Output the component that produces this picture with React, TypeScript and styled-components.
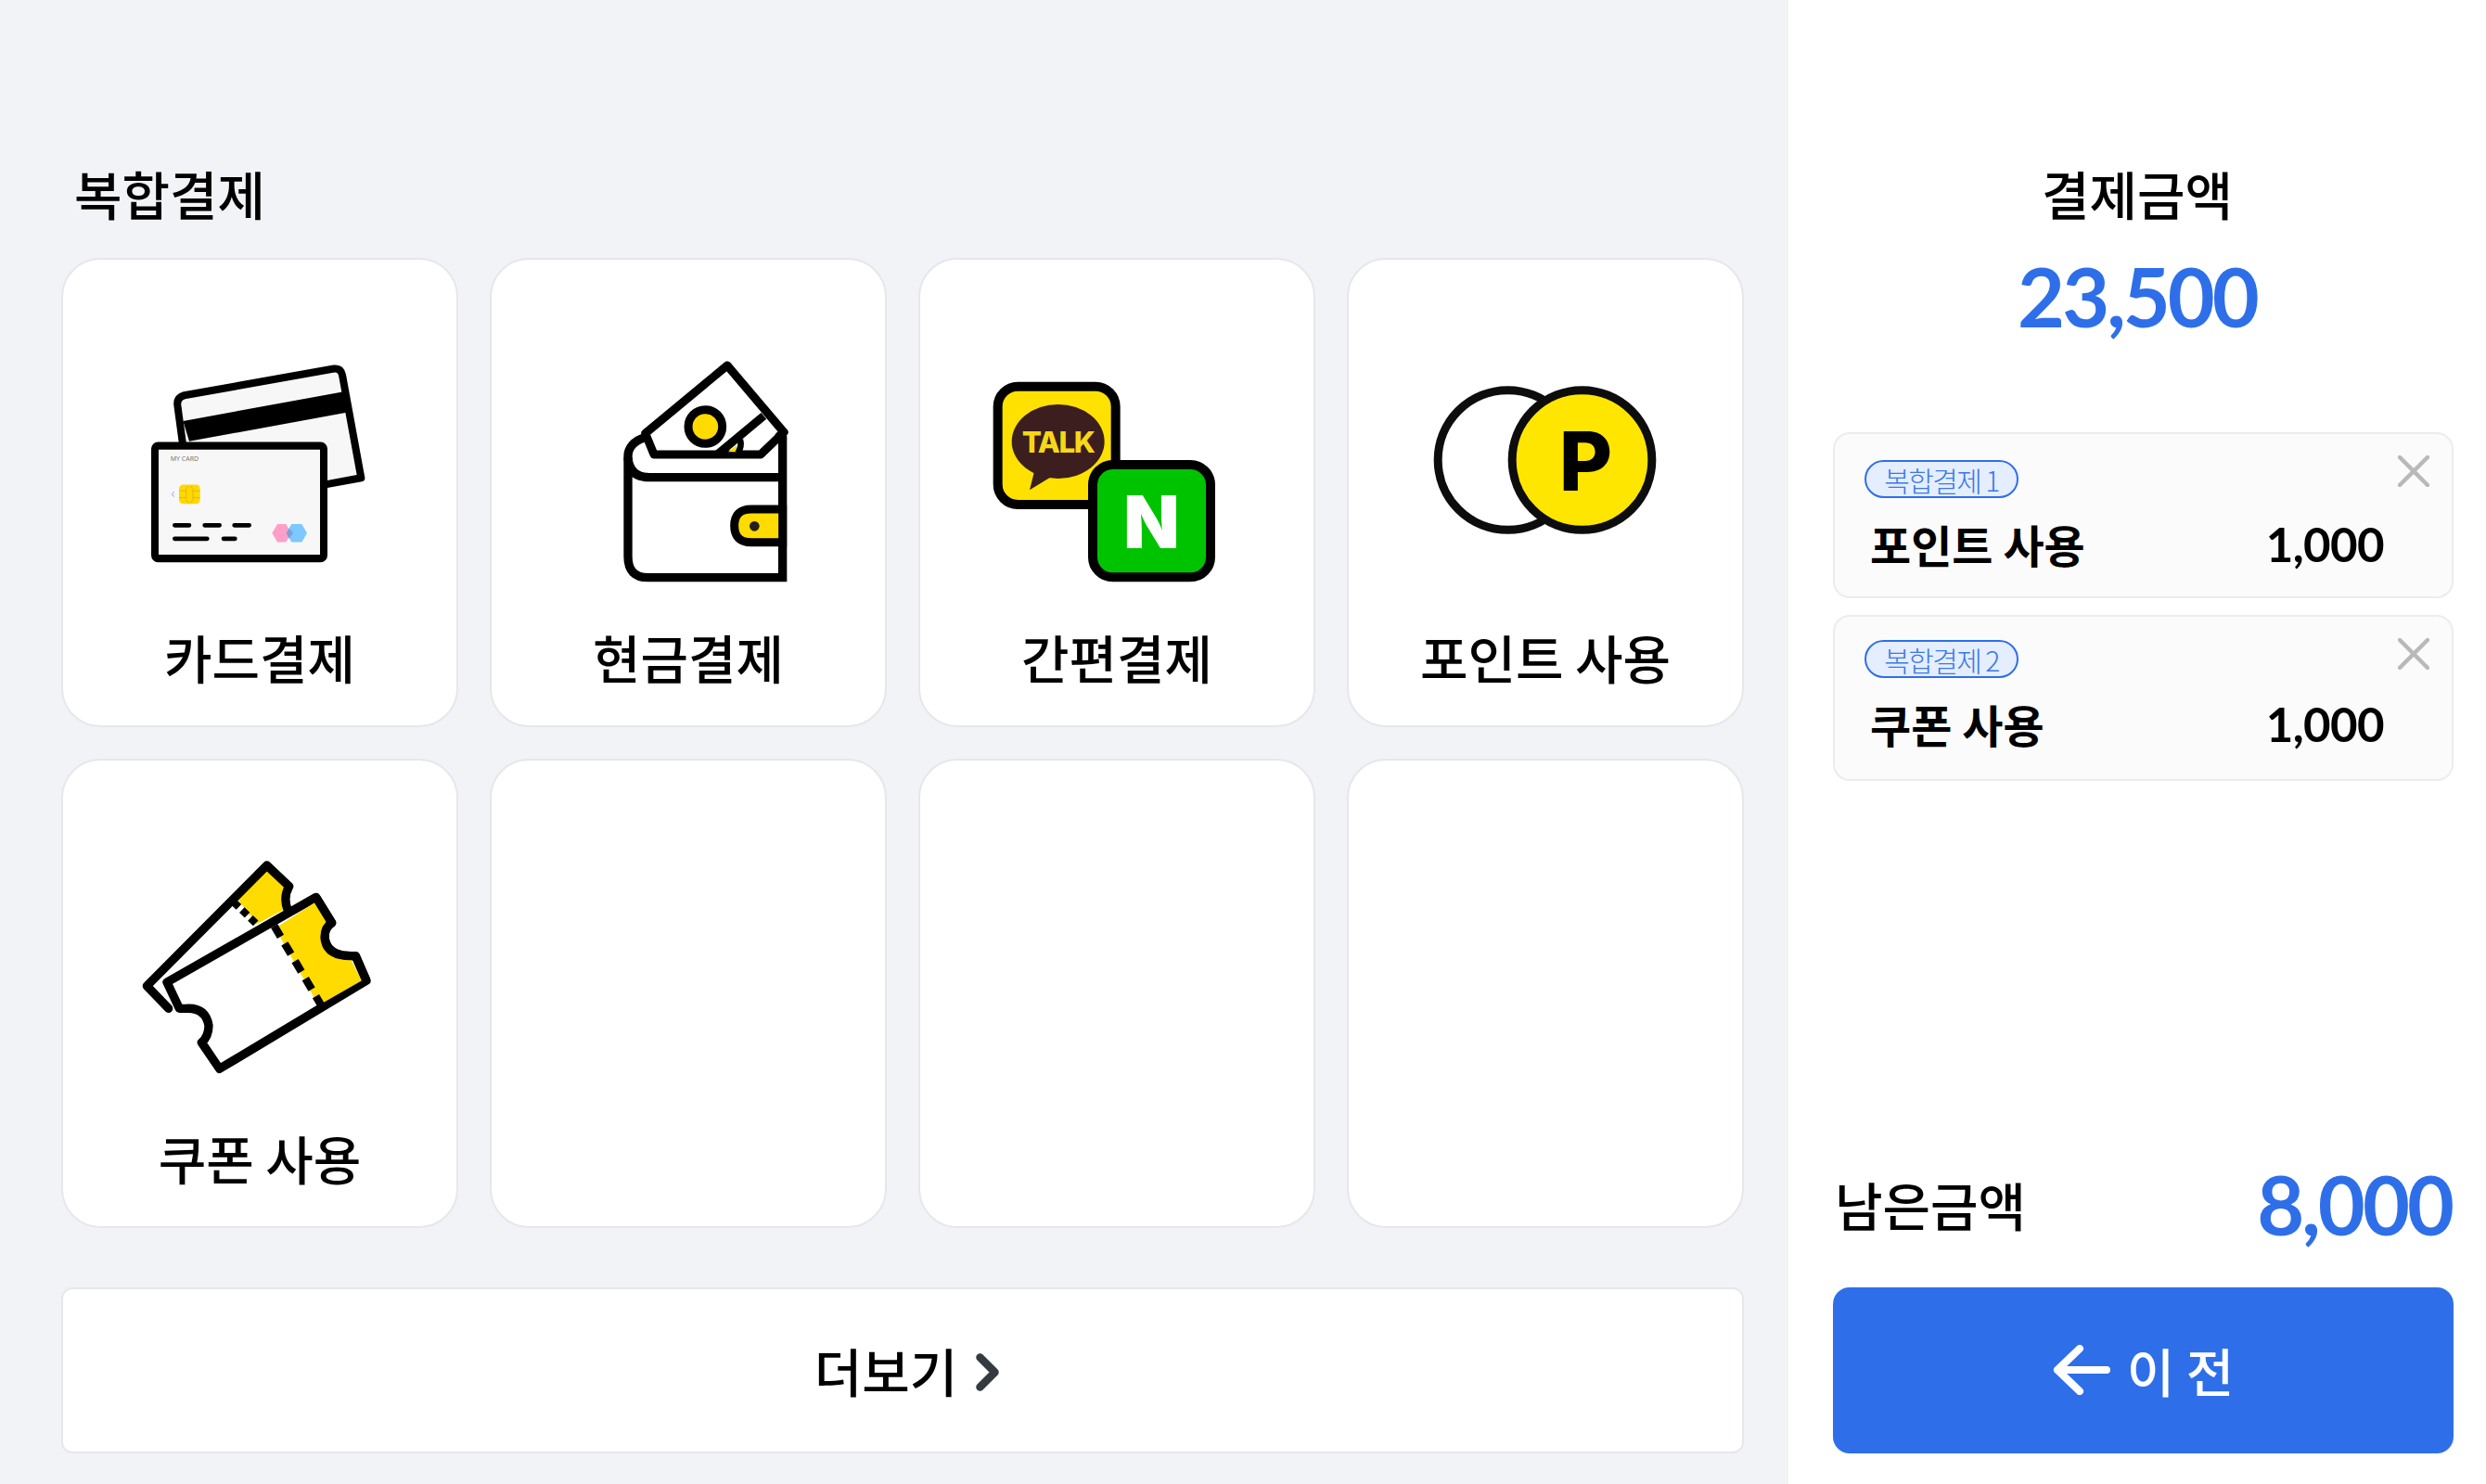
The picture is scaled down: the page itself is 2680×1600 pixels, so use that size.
import React from "react";
import styled, { createGlobalStyle } from "styled-components";

const Global = createGlobalStyle`
  html, body { margin: 0; padding: 0; background: #fff; }
  body { font-family: "Noto Sans CJK KR", "Noto Sans", sans-serif; color: #000; }
  * { box-sizing: border-box; }
`;

const Page = styled.div`
  display: grid;
  grid-template-columns: 1928px 752px;
  width: 2680px;
  height: 1600px;
  overflow: hidden;
`;

const MethodPanel = styled.main`
  display: flex;
  flex-direction: column;
  background: #f2f3f7;
  padding: 168px 48px 33px 66px;
`;

const Heading = styled.h1`
  margin: 0;
  padding-left: 14px;
  height: 110px;
  font-size: 56px;
  line-height: 80px;
  font-weight: 500;
`;

const MethodGrid = styled.div`
  display: grid;
  grid-template-columns: repeat(4, 1fr);
  grid-auto-rows: 506px;
  gap: 34px;
`;

const MethodCard = styled.div`
  display: flex;
  flex-direction: column;
  align-items: center;
  background: #fff;
  border: 2px solid #e6e7ea;
  border-radius: 42px;
  padding-top: 70px;
`;

const MethodIcon = styled.svg`
  display: block;
  width: 300px;
  height: 300px;
`;

const MethodLabel = styled.span`
  margin-top: 27px;
  font-size: 56px;
  line-height: 62px;
  font-weight: 500;
  white-space: pre;
`;

const MoreButton = styled.button`
  display: flex;
  align-items: center;
  justify-content: center;
  gap: 20px;
  margin-top: 64px;
  height: 179px;
  padding: 0 0 2px 9px;
  background: #fff;
  border: 2px solid #e6e7ea;
  border-radius: 12px;
  font: inherit;
  font-size: 56px;
  font-weight: 500;
  color: #000;
`;

const Chevron = styled.svg`
  display: block;
  width: 25px;
  height: 41px;
  margin-top: 6px;
`;

const SummaryPanel = styled.aside`
  display: flex;
  flex-direction: column;
  background: #fff;
  padding: 168px 0 33px;
`;

const SummaryHead = styled.div`
  display: flex;
  flex-direction: column;
  align-items: center;
  height: 298px;
`;

const SummaryTitle = styled.h2`
  margin: 0;
  font-size: 56px;
  line-height: 80px;
  font-weight: 500;
`;

const Amount = styled.span`
  font-family: Lato, "Liberation Sans", sans-serif;
  font-size: 88px;
  font-weight: 700;
  letter-spacing: -3px;
  color: #2e6fe9;
  line-height: 100px;
`;

const TotalAmount = styled(Amount)`
  margin-top: 21px;
`;

const ItemList = styled.div`
  display: flex;
  flex-direction: column;
  gap: 18px;
  margin: 0 35px 0 48px;
  flex: 1;
`;

const Item = styled.div`
  position: relative;
  height: 179px;
  padding: 25px 73px 0 32px;
  background: #fbfbfb;
  border: 2px solid #ececec;
  border-radius: 18px;

  &:first-child {
    padding-top: 28px;
  }
`;

const Tag = styled.span`
  display: inline-flex;
  align-items: center;
  justify-content: center;
  width: 166px;
  height: 41px;
  background: #e4eeff;
  border: 2px solid #2e6fe9;
  border-radius: 21px;
  font-size: 30px;
  font-weight: 300;
  letter-spacing: -1.6px;
  color: #3b78ea;
`;

const ItemRow = styled.div`
  display: flex;
  justify-content: space-between;
  align-items: center;
  height: 66px;
  margin-top: 16px;
  padding-left: 6px;
`;

const ItemName = styled.span`
  font-size: 48px;
  font-weight: 700;
  white-space: pre;
`;

const ItemValue = styled.span`
  font-family: Lato, "Liberation Sans", sans-serif;
  font-size: 51px;
  font-weight: 700;
  letter-spacing: -0.6px;
`;

const CloseIcon = styled.svg`
  position: absolute;
  top: 23px;
  right: 24px;
  width: 34px;
  height: 34px;
`;

const Remaining = styled.div`
  display: flex;
  align-items: center;
  justify-content: space-between;
  height: 100px;
  margin: 0 37px 40px 50px;
`;

const RemainingLabel = styled.span`
  font-size: 56px;
  line-height: 80px;
  font-weight: 500;
`;

const BackButton = styled.button`
  display: flex;
  align-items: center;
  justify-content: center;
  gap: 18px;
  height: 179px;
  margin: 0 35px 0 48px;
  padding: 0 0 2px;
  background: #2e6fe9;
  border: 0;
  border-radius: 18px;
  font: inherit;
  font-size: 56px;
  font-weight: 500;
  color: #fff;
  white-space: pre;
`;

const BackArrow = styled.svg`
  display: block;
  width: 62px;
  height: 54px;
`;

const CardIcon = () => (
  <MethodIcon viewBox="210 237 900 889" preserveAspectRatio="none">
    <path d="M414 640L394 495Q391 470 416 463L900 378Q922 375 927 398L988 727L860 750Z" fill="#f7f7f7" stroke="#000" strokeWidth="24" strokeLinejoin="round" />
    <path d="M412 545L928 452L941 518L432 610Z" fill="#000" />
    <rect x="321" y="624" width="546" height="360" rx="10" fill="#f7f7f7" stroke="#000" strokeWidth="24" />
    <text x="371" y="672" fontFamily="'Noto Sans', sans-serif" fontSize="21" fill="#777">MY CARD</text>
    <path d="M383 771L376 779L383 787" fill="none" stroke="#9db8ee" strokeWidth="3" />
    <rect x="399" y="748" width="68" height="62" rx="14" fill="#ffd800" />
    <path d="M399 768H422M399 790H422M444 768H467M444 790H467M422 762V796M444 762V796M422 762L430 752M444 762L436 752M422 796L430 808M444 796L436 808" stroke="#d9a900" strokeWidth="2" fill="none" />
    <path d="M385 878H432M482 878H530M578 878H626M385 921H490M543 921H580" stroke="#000" strokeWidth="14" strokeLinecap="round" />
    <polygon points="700,903 717,874 745,874 762,903 745,932 717,932" fill="#ff9fc8" />
    <polygon points="746,903 763,874 796,874 813,903 796,932 763,932" fill="#7cc8ff" />
    <polygon points="746,903 755,888 768,903 755,920" fill="#7c9fdb" />
  </MethodIcon>
);

const WalletIcon = () => (
  <MethodIcon viewBox="-24 0 900 900">
    <path d="M315 420L287 352L552 132L735 348L660 420Z" fill="#fff" stroke="#000" strokeWidth="27" strokeLinejoin="round" />
    <path d="M670 295L520 420" stroke="#000" strokeWidth="27" fill="none" />
    <circle cx="481" cy="330" r="55" fill="#ffdb00" stroke="#000" strokeWidth="27" />
    <path d="M555 412L582 390L584 412Z" fill="#ffdb00" />
    <path d="M594 372Q600 395 586 415" stroke="#000" strokeWidth="20" fill="none" />
    <path d="M285 365C250 375 231 400 231 425V750Q231 818 295 818H731V360" fill="none" stroke="#000" strokeWidth="28" />
    <path d="M231 430Q235 494 300 494H731" fill="none" stroke="#000" strokeWidth="28" />
    <path d="M731 597H630Q575 597 575 650Q575 704 630 704H731Z" fill="#ffdb00" stroke="#000" strokeWidth="27" />
    <circle cx="640" cy="652" r="16" fill="#231f20" />
    <path d="M735 348L720 360" stroke="#000" strokeWidth="27" strokeLinecap="round" />
  </MethodIcon>
);

const TalkIcon = () => (
  <MethodIcon viewBox="42 -90 900 900">
    <rect x="107" y="110" width="381" height="382" rx="65" fill="#ffe100" stroke="#000" strokeWidth="30" />
    <ellipse cx="302" cy="288" rx="150" ry="120" fill="#3c1e1e" />
    <path d="M225 385L210 445L280 402Z" fill="#3c1e1e" />
    <text x="302" y="324" textAnchor="middle" fontFamily="Inter, sans-serif" fontWeight="800" fontSize="94" letterSpacing="-4" fill="#f5d818">TALK</text>
    <rect x="414" y="363" width="381" height="364" rx="65" fill="#00c300" stroke="#000" strokeWidth="30" />
    <text x="604" y="634" textAnchor="middle" fontFamily="Inter, sans-serif" fontWeight="900" fontSize="235" fill="#fff">N</text>
  </MethodIcon>
);

const PointIcon = () => (
  <MethodIcon viewBox="19.5 -120 900 900">
    <circle cx="348" cy="318" r="226" fill="#fff" stroke="#0d0d0d" strokeWidth="27" />
    <circle cx="588" cy="318" r="226" fill="#ffe600" stroke="#0d0d0d" strokeWidth="27" />
    <text x="600" y="417" textAnchor="middle" fontFamily="Inter, sans-serif" fontWeight="800" fontSize="264" fill="#000">P</text>
  </MethodIcon>
);

const CouponIcon = () => (
  <MethodIcon viewBox="0 -57 900 900">
    <path d="M155 535L85 462L473 72L545 140Q525 175 540 215L440 280L370 190L155 535Z" fill="#fff" />
    <path d="M377 180L473 85L532 140Q518 175 528 215L440 262Z" fill="#ffdb00" />
    <path d="M155 535L85 462L473 72L545 140Q525 175 540 215" fill="none" stroke="#000" strokeWidth="28" strokeLinejoin="round" strokeLinecap="round" />
    <path d="M365 190L440 262" stroke="#000" strokeWidth="24" strokeDasharray="24 14" />
    <path d="M150 450L632 175L683 258Q660 272 660 305Q665 365 745 365L760 365L795 445L320 730L262 645Q285 625 285 590Q275 530 210 535L190 535Z" fill="#fff" stroke="#000" strokeWidth="28" strokeLinejoin="round" />
    <path d="M500 275L632 190L670 258Q648 272 648 305Q655 375 745 378L780 445L640 525Z" fill="#ffdb00" />
    <path d="M497 268L652 530" stroke="#000" strokeWidth="25" strokeDasharray="40 26" />
    <path d="M632 175L683 258Q660 272 660 305Q665 365 745 365L760 365L795 445" fill="none" stroke="#000" strokeWidth="28" strokeLinejoin="round" />
  </MethodIcon>
);

const methods = [
  { label: "카드결제", icon: <CardIcon /> },
  { label: "현금결제", icon: <WalletIcon /> },
  { label: "간편결제", icon: <TalkIcon /> },
  { label: "포인트 사용", icon: <PointIcon /> },
  { label: "쿠폰 사용", icon: <CouponIcon /> },
  null,
  null,
  null,
];

const items = [
  { tag: "복합결제 1", name: "포인트 사용", value: "1,000" },
  { tag: "복합결제 2", name: "쿠폰 사용", value: "1,000" },
];

export default function App() {
  return (
    <Page>
      <Global />
      <MethodPanel>
        <Heading>복합결제</Heading>
        <MethodGrid>
          {methods.map((m, i) => (
            <MethodCard key={i}>
              {m && m.icon}
              {m && <MethodLabel>{m.label}</MethodLabel>}
            </MethodCard>
          ))}
        </MethodGrid>
        <MoreButton>
          더보기
          <Chevron viewBox="0 0 25 41">
            <path d="M4.5 4.5L20.5 20.5L4.5 36.5" fill="none" stroke="#343a40" strokeWidth="8.5" strokeLinecap="round" strokeLinejoin="round" />
          </Chevron>
        </MoreButton>
      </MethodPanel>
      <SummaryPanel>
        <SummaryHead>
          <SummaryTitle>결제금액</SummaryTitle>
          <TotalAmount>23,500</TotalAmount>
        </SummaryHead>
        <ItemList>
          {items.map((it) => (
            <Item key={it.tag}>
              <Tag>{it.tag}</Tag>
              <ItemRow>
                <ItemName>{it.name}</ItemName>
                <ItemValue>{it.value}</ItemValue>
              </ItemRow>
              <CloseIcon viewBox="0 0 34 34">
                <path d="M2 2L32 32M32 2L2 32" stroke="#b9b9b9" strokeWidth="4.5" strokeLinecap="round" />
              </CloseIcon>
            </Item>
          ))}
        </ItemList>
        <Remaining>
          <RemainingLabel>남은금액</RemainingLabel>
          <Amount>8,000</Amount>
        </Remaining>
        <BackButton>
          <BackArrow viewBox="0 0 62 54">
            <path d="M29 4L5 27L29 50M5 27H58" fill="none" stroke="#fff" strokeWidth="8" strokeLinecap="round" strokeLinejoin="round" />
          </BackArrow>
          이 전
        </BackButton>
      </SummaryPanel>
    </Page>
  );
}
